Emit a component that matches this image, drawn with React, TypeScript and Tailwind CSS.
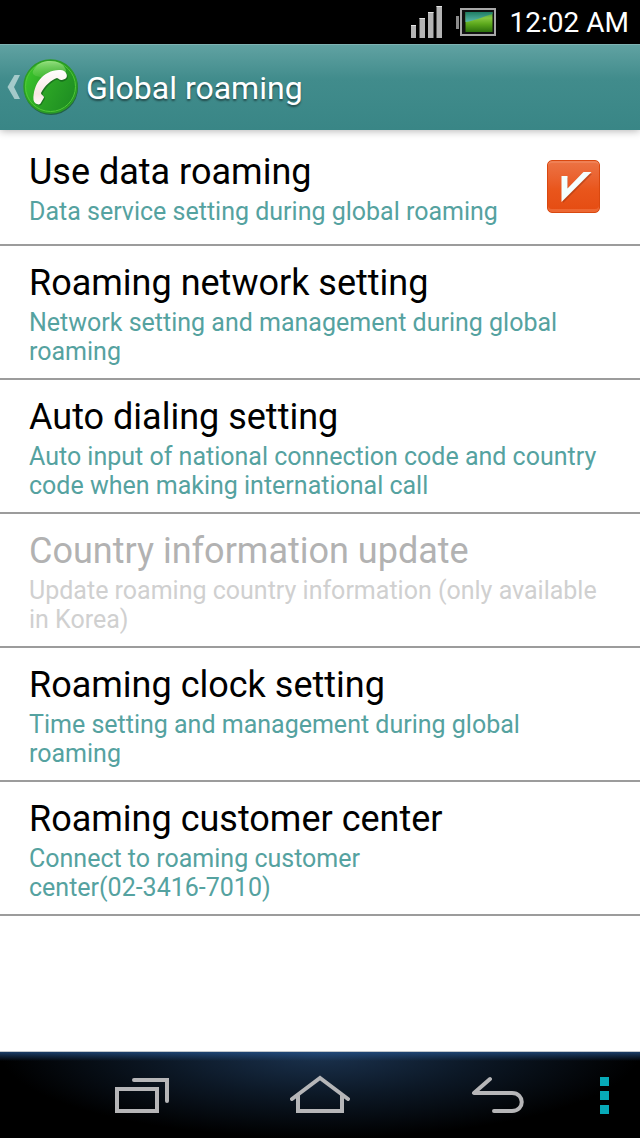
import { useState, type ReactNode } from "react";

type Item = {
  title: string;
  summary: ReactNode;
  disabled?: boolean;
};

const items: Item[] = [
  {
    title: "Roaming network setting",
    summary: "Network setting and management during global roaming",
  },
  {
    title: "Auto dialing setting",
    summary:
      "Auto input of national connection code and country code when making international call",
  },
  {
    title: "Country information update",
    summary: "Update roaming country information (only available in Korea)",
    disabled: true,
  },
  {
    title: "Roaming clock setting",
    summary: "Time setting and management during global roaming",
  },
  {
    title: "Roaming customer center",
    summary: (
      <>
        Connect to roaming customer{" "}
        <span className="whitespace-nowrap">center(02-3416-7010)</span>
      </>
    ),
  },
];

function StatusBar() {
  return (
    <div className="flex h-11 items-center justify-end bg-black pr-[11px] text-white">
      <svg width="34" height="36" viewBox="0 0 34 36" aria-label="Signal" role="img">
        <g fill="#b4b4b4">
          <rect x="1" y="21" width="5" height="13" />
          <rect x="9.500" y="14" width="5.500" height="20" />
          <rect x="18" y="8" width="5.500" height="26" />
          <rect x="26.500" y="2" width="5.500" height="32" />
        </g>
        <g fill="#e4e4e4">
          <rect x="1" y="21" width="5" height="1" />
          <rect x="9.500" y="14" width="5.500" height="1" />
          <rect x="18" y="8" width="5.500" height="1" />
          <rect x="26.500" y="2" width="5.500" height="1" />
        </g>
      </svg>
      <svg
        className="ml-3"
        width="42"
        height="30"
        viewBox="0 0 42 30"
        aria-label="Battery"
        role="img"
      >
        <defs>
          <linearGradient id="charge" x1="0" y1="0" x2="0" y2="1">
            <stop offset="0" stopColor="#3f9a4a" />
            <stop offset="0.3" stopColor="#86c840" />
            <stop offset="0.6" stopColor="#5ca81c" />
            <stop offset="1" stopColor="#2b700c" />
          </linearGradient>
          <linearGradient id="sky" x1="0" y1="0" x2="0" y2="1">
            <stop offset="0" stopColor="#1f7d63" />
            <stop offset="1" stopColor="#5bb8ad" />
          </linearGradient>
        </defs>
        <rect x="0" y="9" width="3" height="13" fill="#8c8c8c" />
        <rect x="5" y="2" width="34" height="26" fill="#111" stroke="#a8a8a8" strokeWidth="2" />
        <rect x="9.500" y="5" width="27" height="20" fill="url(#charge)" />
        <path d="M9.500 5H36.500V7C28 9 19 14 9.500 15Z" fill="url(#sky)" />
      </svg>
      <span className="ml-3 pt-0.5 text-[28px] leading-8">12:02 AM</span>
    </div>
  );
}

function PhoneIcon() {
  return (
    <svg width="58" height="59" viewBox="0 0 58 59" aria-hidden="true">
      <defs>
        <linearGradient id="ball" x1="0" y1="0.2" x2="1" y2="0.7">
          <stop offset="0" stopColor="#3cc92c" />
          <stop offset="0.5" stopColor="#2ba325" />
          <stop offset="1" stopColor="#1d8d22" />
        </linearGradient>
        <linearGradient id="gloss" x1="0" y1="0" x2="0" y2="1">
          <stop offset="0" stopColor="#a4e58e" stopOpacity="0.85" />
          <stop offset="1" stopColor="#6fd055" stopOpacity="0.3" />
        </linearGradient>
        <linearGradient id="handset" x1="0" y1="0" x2="0" y2="1">
          <stop offset="0" stopColor="#ffffff" />
          <stop offset="0.7" stopColor="#f7e6e1" />
          <stop offset="1" stopColor="#fffaf7" />
        </linearGradient>
      </defs>
      <circle cx="30" cy="30" r="27" fill="#10451f" opacity="0.6" />
      <circle cx="29.500" cy="28.500" r="26.500" fill="url(#ball)" stroke="#2b9c25" strokeWidth="1.500" />
      <circle cx="29.500" cy="28.500" r="25" fill="none" stroke="#52c936" strokeWidth="1" />
      <path
        d="M12 13C16 5 23 3 29 3C36 3 43 6 45 12C46 16 39 18 29 19C18 20 10 18 12 13Z"
        fill="url(#gloss)"
      />
      <path
        d="M13.500 43C13 27 23 13.500 39 13C42 12.500 45.500 14 46.500 17.500C47.500 20.500 46.500 22 42 23.500C39 24.500 38 22 36.500 21.500C31 23 24 30 21.500 36C21.500 38 24 38.500 24 40.500L20.500 46.500C19 48.500 14 47 13.500 43Z"
        fill="#10561a"
        opacity="0.6"
      />
      <path
        d="M12.500 42C12 26 22 12.500 38 12C41 11.500 44.500 12.500 45.500 16C46.500 19 45.500 21 41 22C38.500 22.500 38 20.500 36 20C31 21.500 23 28 20 35C20 37 23 37.500 23 39.500L19.500 45.500C18 47.500 13 46 12.500 42Z"
        fill="url(#handset)"
      />
    </svg>
  );
}

function ActionBar() {
  return (
    <header className="z-10 flex h-[86px] items-center border-t border-[#7fb3b3] bg-linear-to-b from-[#60a2a2] via-[#418c8c] via-40% to-[#398686] pl-1.5 shadow-[0_1px_8px_rgba(0,0,0,0.3)]">
      <button type="button" aria-label="Navigate up" className="flex items-center">
        <svg width="15" height="29" viewBox="0 0 15 29" aria-hidden="true">
          <path d="M8.500 2H14L8 14L14 26H8.500L1.500 14Z" fill="#a4caca" />
        </svg>
        <PhoneIcon />
      </button>
      <h1 className="ml-[7px] text-[32px] leading-10 text-white [text-shadow:0_2px_2px_rgba(0,0,0,0.45)]">
        Global roaming
      </h1>
    </header>
  );
}

function DataRoamingRow() {
  const [checked, setChecked] = useState(true);
  return (
    <label className="flex min-h-[116px] items-center border-b-2 border-[#9c9c9c] pt-[18px] pr-10 pb-[15px] pl-[29px]">
      <span className="flex flex-1 flex-col gap-1">
        <span className="text-[36px] leading-[42px] text-black">Use data roaming</span>
        <span className="text-[25px] leading-[29px] text-[#55a2a0]">
          Data service setting during global roaming
        </span>
      </span>
      <span className="grid shrink-0 pb-1">
        <input
          type="checkbox"
          checked={checked}
          onChange={(e) => setChecked(e.target.checked)}
          className="col-start-1 row-start-1 size-[53px] appearance-none rounded-[5px] border border-[#d9480f] bg-linear-to-b from-[#ec7344] via-[#e9561c] via-55% to-[#e54c12] shadow-[inset_0_2px_0_#ef8055,inset_0_-3px_0_#ed6833]"
        />
        {checked && (
          <svg
            className="pointer-events-none col-start-1 row-start-1"
            width="53"
            height="53"
            viewBox="0 0 53 53"
            aria-hidden="true"
          >
            <path d="M15 18H21V30L37 14H45L16 43Z" fill="#9c3510" opacity="0.5" />
            <path d="M14.500 16H20.500V28.500L36.500 12H44.500L14.500 42Z" fill="#f3ffff" />
          </svg>
        )}
      </span>
    </label>
  );
}

function SettingRow({ title, summary, disabled }: Item) {
  return (
    <button
      type="button"
      disabled={disabled}
      className="flex w-full flex-col gap-1 border-b-2 border-[#9c9c9c] pt-4 pr-9 pb-3 pl-[29px] text-left text-black disabled:text-[#b2b2b2]"
    >
      <span className="text-[36px] leading-[42px]">{title}</span>
      <span
        className={
          disabled
            ? "text-[25px] leading-[29px] text-[#d0d0d0]"
            : "text-[25px] leading-[29px] text-[#55a2a0]"
        }
      >
        {summary}
      </span>
    </button>
  );
}

function NavigationBar() {
  return (
    <nav className="grid h-[87px] grid-cols-[3fr_10fr_10fr_10fr_3fr] items-center border-t border-[#c3c8cc] bg-black bg-[linear-gradient(to_bottom,rgba(35,80,135,0.75),rgba(0,0,0,0)_9px),radial-gradient(ellipse_50%_100%_at_50%_0%,#1b3350,#0c1826_50%,#000000)]">
      <button type="button" aria-label="Recent apps" className="col-start-2 justify-self-center">
        <svg width="54" height="38" viewBox="0 0 54 38" fill="none" stroke="#b6b6b8" strokeWidth="4" aria-hidden="true">
          <rect x="2" y="13" width="40" height="22" />
          <path d="M19 4H52V25" strokeLinecap="round" />
        </svg>
      </button>
      <button type="button" aria-label="Home" className="justify-self-center">
        <svg width="60" height="40" viewBox="0 0 60 40" fill="none" stroke="#b6b6b8" strokeWidth="4" aria-hidden="true">
          <path d="M2 24L30 3L58 24" strokeLinecap="round" />
          <path d="M8 20V36H52V20" />
        </svg>
      </button>
      <button type="button" aria-label="Back" className="justify-self-center">
        <svg width="54" height="38" viewBox="0 0 54 38" fill="none" stroke="#b6b6b8" strokeWidth="4" strokeLinecap="round" strokeLinejoin="round" aria-hidden="true">
          <path d="M19 3L3 17H41C54 17 54 35 41 35H23" />
        </svg>
      </button>
      <button type="button" aria-label="Menu" className="flex flex-col gap-[5px] pl-[13px]">
        <span className="size-[9px] bg-[#07aab8]" />
        <span className="size-[9px] bg-[#07aab8]" />
        <span className="size-[9px] bg-[#07aab8]" />
      </button>
    </nav>
  );
}

export default function App() {
  return (
    <div className="flex min-h-screen flex-col bg-white font-[Roboto,'Noto_Sans',sans-serif]">
      <StatusBar />
      <ActionBar />
      <main className="flex-1">
        <DataRoamingRow />
        {items.map((item) => (
          <SettingRow key={item.title} {...item} />
        ))}
      </main>
      <NavigationBar />
    </div>
  );
}
